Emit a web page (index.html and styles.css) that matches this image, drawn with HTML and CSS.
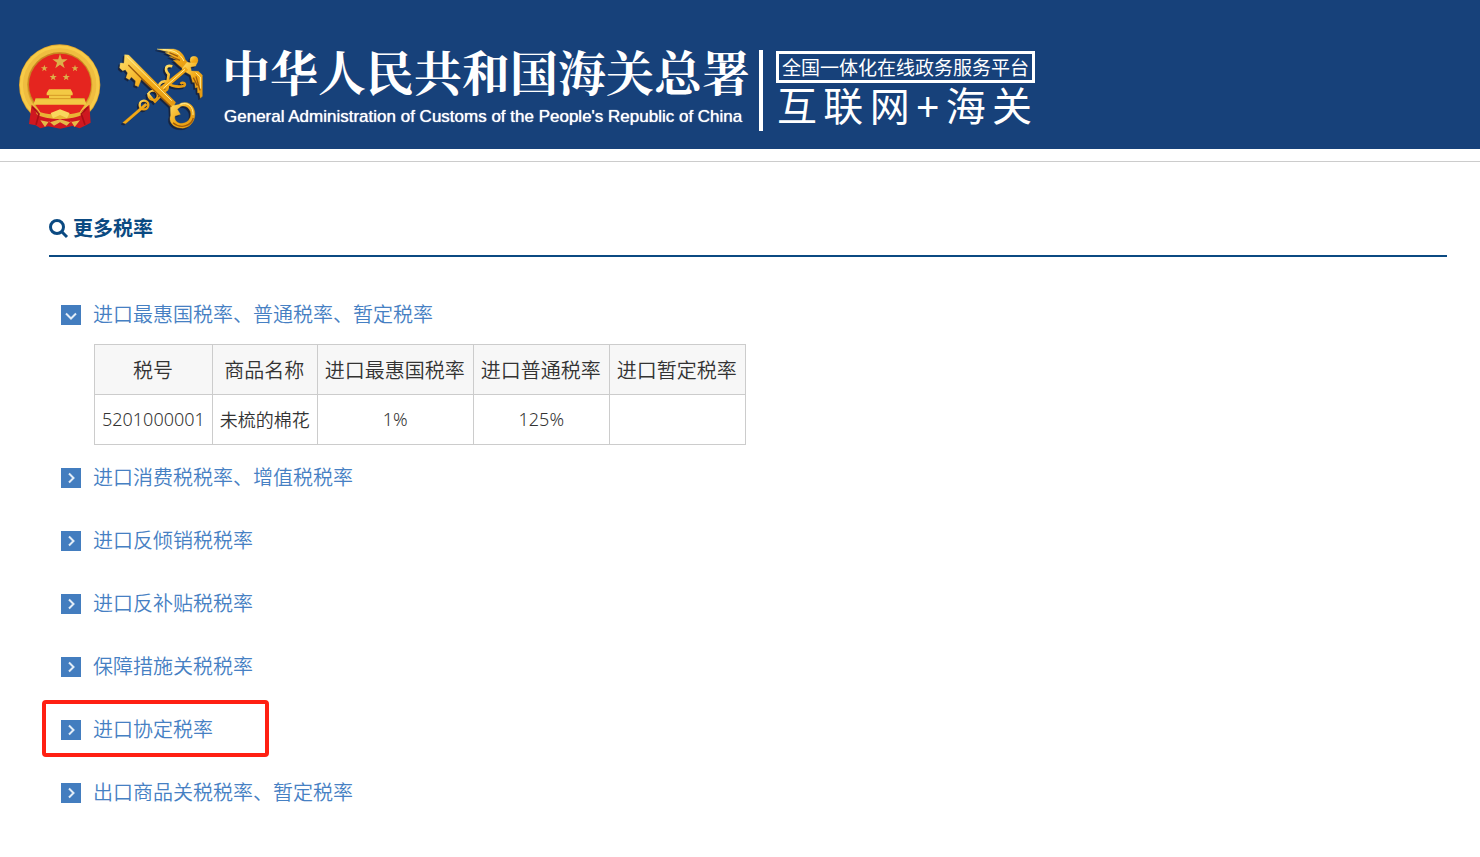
FILE: index.html
```
<!DOCTYPE html>
<html lang="zh-CN">
<head>
  <meta charset="UTF-8">
  <meta name="viewport" content="width=device-width, initial-scale=1.0">
  <title>更多税率</title>
  <link rel="stylesheet" href="styles.css">
</head>
<body>
  <svg class="sprite" aria-hidden="true">
    <symbol id="arrow-right" viewBox="0 0 20 20"><path d="M8 5.500L12.500 10L8 14.500" /></symbol>
    <symbol id="arrow-down" viewBox="0 0 20 20"><path d="M5 8.500L10 13.500L15 8.500" /></symbol>
    <symbol id="star" viewBox="-10 -10 20 20"><path d="M0-10L2.300-3.100H9.500L3.700 1.200L5.900 8.100L0 3.900L-5.900 8.100L-3.700 1.200L-9.500-3.100H-2.300Z" /></symbol>
  </svg>

  <header class="header">
    <svg class="logo" viewBox="0 0 300 300" role="img" aria-label="国徽">
      <circle cx="149" cy="150" r="122" fill="#dfa52d" />
      <circle cx="149" cy="150" r="114" fill="none" stroke="#f7cb48" stroke-width="11" />
      <circle cx="149" cy="150" r="104" fill="none" stroke="#efbd40" stroke-width="12" />
      <circle cx="149" cy="148" r="96" fill="#c88722" />
      <circle cx="150" cy="149" r="93" fill="#e5251f" />
      <g fill="#ddb04a">
        <use href="#star" x="126" y="56" width="48" height="48" />
        <use href="#star" x="92" y="89" width="22" height="22" />
        <use href="#star" x="184" y="89" width="22" height="22" />
        <use href="#star" x="118" y="115" width="23" height="23" />
        <use href="#star" x="157" y="115" width="23" height="23" />
      </g>
      <path d="M117 163H182L188 174V181H182V190H223L230 209H70L77 190H117V181H110V174Z" fill="#f3c944" />
      <path d="M117 181H182M78 191H222" stroke="#d69a26" stroke-width="3" />
      <path d="M77 210H223L205 238H95Z" fill="#e5251f" />
      <path d="M65 209L88 232C125 248 175 248 211 232L238 209L242 263L228 271L209 280L187 273L151 281L114 274L91 280L77 271L57 267Z" fill="#cf1820" />
      <path d="M75 224C104 244 194 244 224 224L218 237C194 257 104 257 80 237Z" fill="#e9b335" />
      <path d="M122 234L150 223L179 234L171 250L150 240L129 250Z" fill="#f9d65d" />
      <path d="M91 256L105 276L117 259L132 272L150 262L170 272L183 259L194 276L210 256L180 262L150 253L120 262Z" fill="#e5ba48" />
      <path d="M67 216L87 237L78 269M234 216L214 237L225 269" fill="none" stroke="#a80e16" stroke-width="5" />
    </svg>
    <svg class="logo" viewBox="0 0 300 300" role="img" aria-label="关徽">
      <defs>
        <linearGradient id="gold" x1="0" y1="0" x2="1" y2="1">
          <stop offset="0" stop-color="#ffdf69" />
          <stop offset=".5" stop-color="#f3a916" />
          <stop offset="1" stop-color="#e49a13" />
        </linearGradient>
        <g id="keys">
          <path d="M141 42H190C208 45 219 54 226 74L240 89L231 100L219 101C208 94 197 82 190 76L204 76L178 65L191 65L166 53L178 52Z" />
          <circle cx="252" cy="76" r="12" />
          <path d="M231 82L248 84L261 83L257 93L242 96L244 108L265 109L277 120V184L271 190L268 173L263 174L262 157L256 159L254 142L248 142L242 120L228 112L216 101Z" />
          <path d="M226 96L234 105L171 158L151 171L142 163Z" />
          <path d="M106 205L112 210L47 266L38 263Z" />
          <g fill="none" stroke-width="8">
            <path d="M187 94C166 88 163 104 176 118L173 139C178 154 201 157 222 153C230 147 218 138 212 147" />
            <path d="M178 143C151 130 137 157 155 167" />
            <path d="M151 158C157 181 184 163 169 143" />
            <circle cx="129" cy="181" r="14" stroke-width="6" />
            <circle cx="102" cy="210" r="13" stroke-width="7" />
            <path d="M113 174L135 201L151 185" stroke-width="6" />
          </g>
          <path d="M44 59L56 60L197 202L188 221L94 132L85 155L75 151L77 138L64 126L58 134L48 128L53 114L46 104L38 107L29 99L31 84L42 85Z" />
          <path fill-rule="evenodd" d="M181 215C195 209 204 212 214 204C240 196 259 219 254 246C249 269 231 282 211 279C187 277 175 259 182 241ZM213 214L202 223L211 238L195 243C191 255 203 268 218 265C237 262 246 245 241 229C235 215 224 211 213 214Z" />
        </g>
      </defs>
      <use href="#keys" x="-5" y="5" fill="#17233e" stroke="#17233e" />
      <use href="#keys" fill="url(#gold)" stroke="url(#gold)" />
      <g fill="none" stroke="#fff09a" stroke-width="3">
        <path d="M50 64L185 197M158 44C191 44 209 54 222 78M257 113L271 126V161M211 208C235 199 251 217 249 240M225 103L160 160" />
      </g>
      <g fill="none" stroke="#9e5b0b" stroke-width="4">
        <path d="M55 90L96 131L184 216M189 263C215 285 245 270 250 249M187 66L210 76M178 53L204 64M250 128L262 152M258 124L270 166" />
      </g>
    </svg>
    <div class="agency">
      <div class="agency-name">中华人民共和国海关总署</div>
      <div class="agency-en">General Administration of Customs of the People's Republic of China</div>
    </div>
    <div class="platform">
      <div class="platform-tag">全国一体化在线政务服务平台</div>
      <div class="platform-name">互联网+海关</div>
    </div>
  </header>

  <main class="content">
    <h1 class="title">
      <svg class="search-icon" viewBox="0 0 20 20" aria-hidden="true"><circle cx="8" cy="8" r="6.500" /><path d="M12.800 12.800L18 18" /></svg>
      更多税率
    </h1>

    <section class="rates">
      <button type="button" class="rate open" aria-expanded="true"><svg class="arrow" aria-hidden="true"><use href="#arrow-down" /></svg>进口最惠国税率、普通税率、暂定税率</button>
      <table class="rate-table">
        <thead>
          <tr>
            <th>税号</th>
            <th>商品名称</th>
            <th>进口最惠国税率</th>
            <th>进口普通税率</th>
            <th>进口暂定税率</th>
          </tr>
        </thead>
        <tbody>
          <tr>
            <td>5201000001</td>
            <td>未梳的棉花</td>
            <td>1%</td>
            <td>125%</td>
            <td></td>
          </tr>
        </tbody>
      </table>
      <button type="button" class="rate" aria-expanded="false"><svg class="arrow" aria-hidden="true"><use href="#arrow-right" /></svg>进口消费税税率、增值税税率</button>
      <button type="button" class="rate" aria-expanded="false"><svg class="arrow" aria-hidden="true"><use href="#arrow-right" /></svg>进口反倾销税税率</button>
      <button type="button" class="rate" aria-expanded="false"><svg class="arrow" aria-hidden="true"><use href="#arrow-right" /></svg>进口反补贴税税率</button>
      <button type="button" class="rate" aria-expanded="false"><svg class="arrow" aria-hidden="true"><use href="#arrow-right" /></svg>保障措施关税税率</button>
      <button type="button" class="rate marked" aria-expanded="false"><svg class="arrow" aria-hidden="true"><use href="#arrow-right" /></svg>进口协定税率</button>
      <button type="button" class="rate" aria-expanded="false"><svg class="arrow" aria-hidden="true"><use href="#arrow-right" /></svg>出口商品关税税率、暂定税率</button>
    </section>
  </main>
</body>
</html>
```
FILE: styles.css
```
*,
*::after {
  box-sizing: border-box;
}
body {
  margin: 0;
  background: #fff;
  color: #333;
  font-family: "Noto Sans", "Noto Sans CJK SC", sans-serif;
  font-size: 20px;
}
.sprite {
  display: none;
}

/* header */
.header {
  display: flex;
  align-items: flex-start;
  padding: 35px 10px 14px;
  background: #17417a;
  color: #fff;
}
.logo {
  width: 100px;
  height: 100px;
  flex: none;
}
.agency {
  padding: 8px 0 0 12px;
  white-space: nowrap;
}
.agency-name {
  font-family: "Noto Serif CJK SC", "Noto Sans CJK SC", serif;
  font-size: 48px;
  font-weight: 700;
  line-height: 56px;
}
.agency-en {
  padding-left: 2px;
  font-family: "Liberation Sans", Arial, sans-serif;
  font-size: 17px;
  line-height: 36px;
  text-shadow: 0 0 1px #fff;
}
.platform {
  margin: 15px 0 0 9px;
  padding: 1px 0 0 13px;
  border-left: 4px solid #fff;
  white-space: nowrap;
}
.platform-tag {
  padding: 0 3px;
  border: 3px solid #fff;
  font-family: "Noto Sans CJK SC", sans-serif;
  font-size: 19px;
  line-height: 26px;
}
.platform-name {
  padding: 0 3px 0 1px;
  font-family: "Liberation Sans", "Noto Sans CJK SC", sans-serif;
  font-size: 40px;
  line-height: 48px;
  text-align: justify;
  text-align-last: justify;
}

/* content */
.content {
  margin-top: 12px;
  padding: 51px 33px 20px 49px;
  border-top: 1px solid #ccc;
}
.title {
  display: flex;
  align-items: center;
  gap: 4px;
  margin: 0;
  padding-bottom: 10px;
  border-bottom: 2px solid #0b4a82;
  color: #0b4a82;
  font-size: 20px;
  line-height: 32px;
}
.search-icon {
  width: 20px;
  height: 20px;
  fill: none;
  stroke: currentColor;
  stroke-width: 3;
}
.rates {
  padding: 26px 0 0 12px;
}
.rate {
  position: relative;
  display: flex;
  align-items: center;
  gap: 12px;
  height: 63px;
  padding: 0;
  border: 0;
  background: none;
  color: #4680c3;
  font-family: inherit;
  font-size: 20px;
  font-weight: 350;
  cursor: pointer;
}
.open {
  height: 61px;
}
.arrow {
  width: 20px;
  height: 20px;
  margin-top: 2px;
  background: #437dbf;
  fill: none;
  stroke: #e3edf7;
  stroke-width: 2;
}
.marked::after {
  content: "";
  position: absolute;
  top: 3px;
  left: -19px;
  width: 227px;
  height: 57px;
  border: 4px solid #ff2012;
  border-radius: 4px;
}

.rate-table {
  margin-left: 33px;
  border-collapse: collapse;
  text-align: center;
  white-space: nowrap;
}
.rate-table th,
.rate-table td {
  height: 50px;
  border: 1px solid #ccc;
  font-weight: 350;
}
.rate-table th {
  padding: 0 8px 0 7px;
  background: #f7f7f7;
}
.rate-table td {
  padding: 0 7px 2px;
  font-size: 18px;
}
```
